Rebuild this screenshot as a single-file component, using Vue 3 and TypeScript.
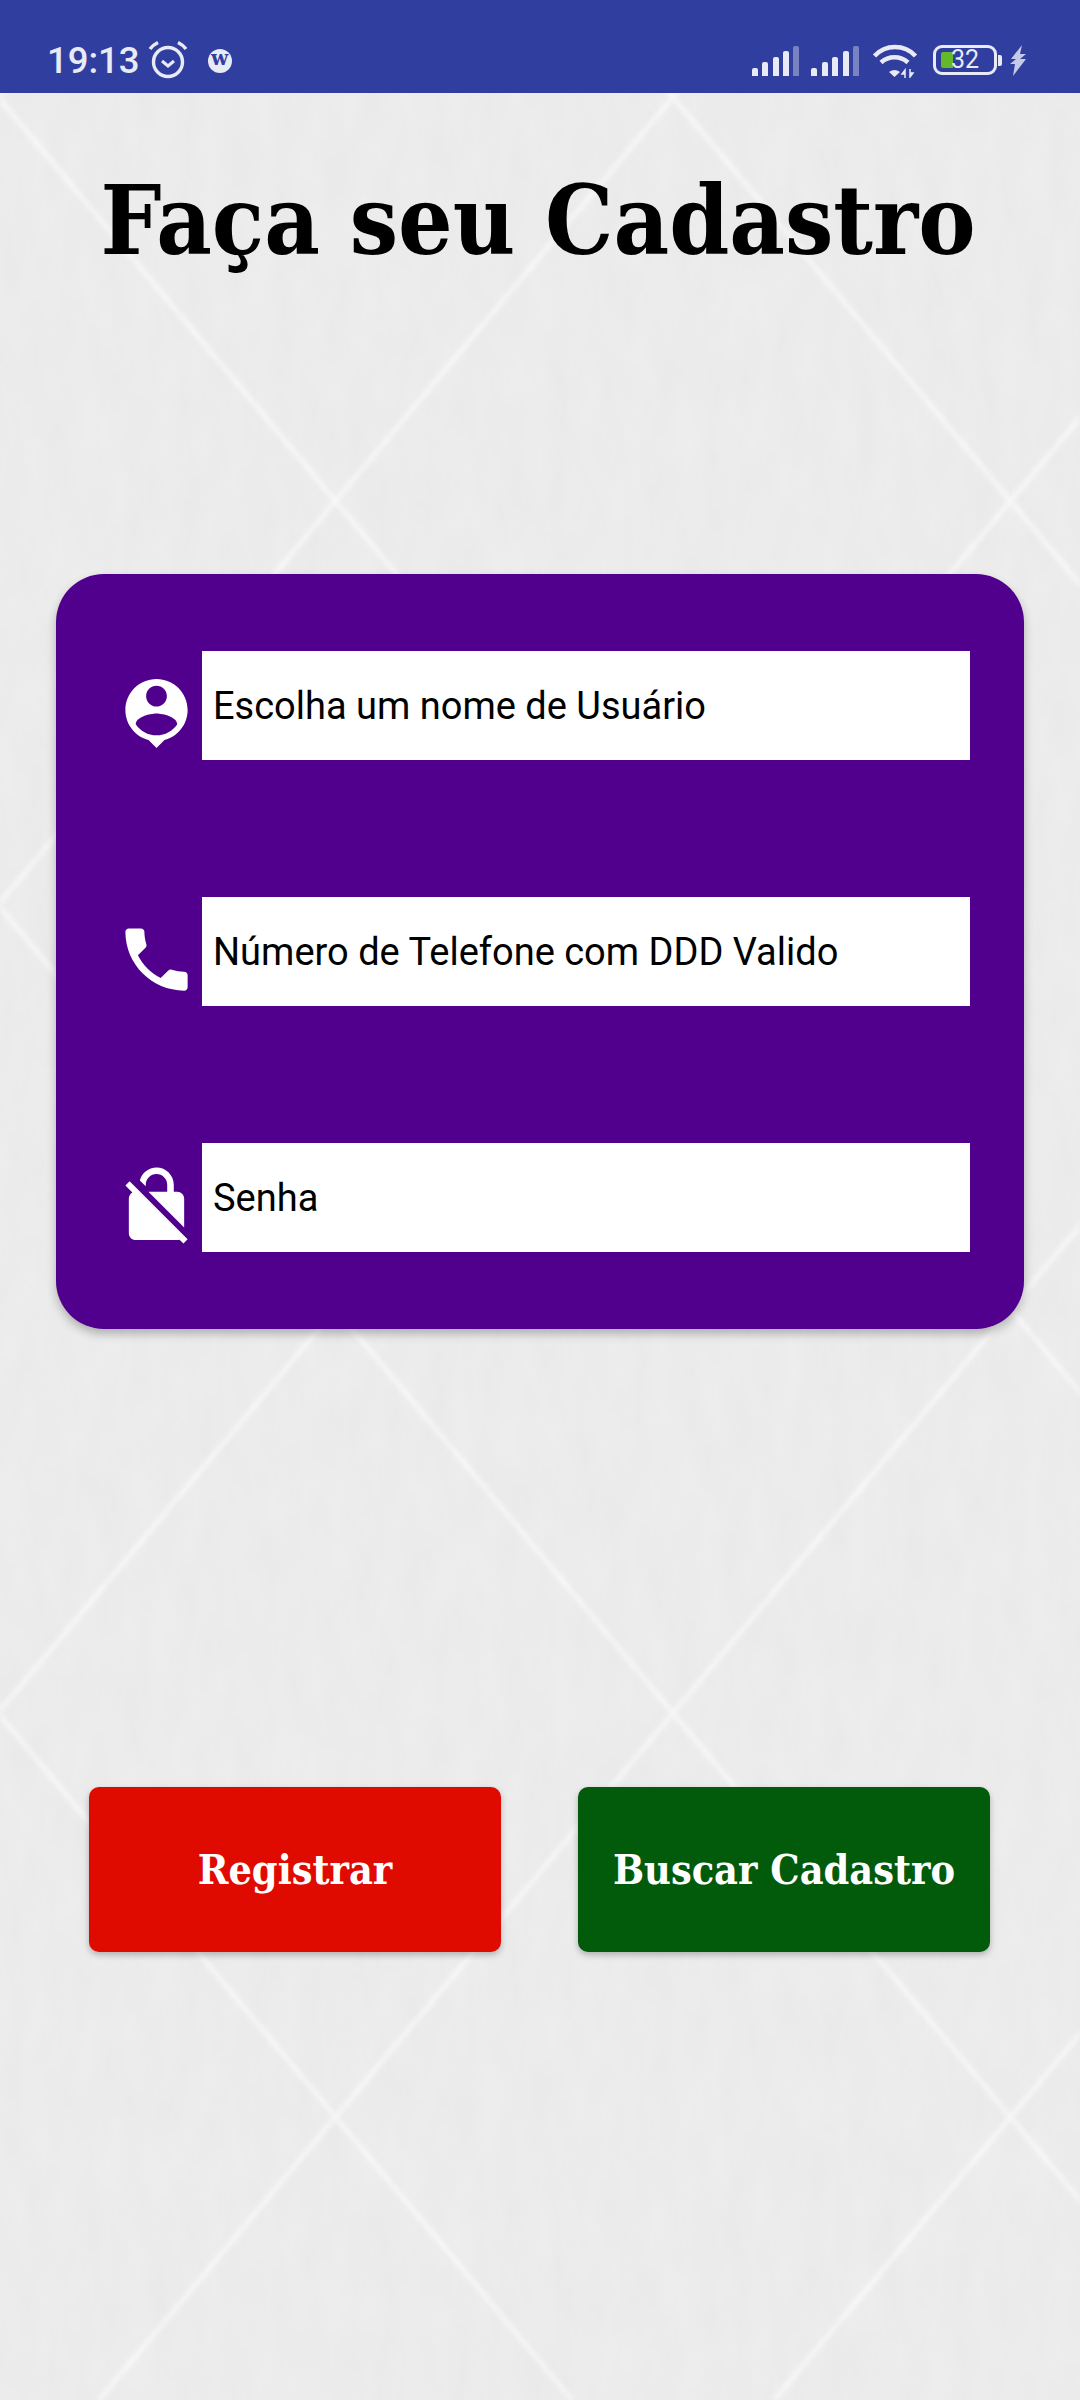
<script setup lang="ts">
interface Field {
  label: string
  icon: string
}

const signalBars = [
  { height: 8, dim: false },
  { height: 14, dim: false },
  { height: 19, dim: false },
  { height: 25, dim: false },
  { height: 30, dim: true },
]

const fields: Field[] = [
  {
    label: 'Escolha um nome de Usuário',
    icon: 'M12 2c-4.97 0-9 4.03-9 9 0 4.17 2.84 7.67 6.69 8.69L12 22l2.31-2.31C18.16 18.67 21 15.17 21 11c0-4.97-4.03-9-9-9zm0 2c1.66 0 3 1.34 3 3s-1.34 3-3 3-3-1.34-3-3 1.34-3 3-3zm0 14.3c-2.5 0-4.71-1.28-6-3.22.03-1.99 4-3.08 6-3.08 1.99 0 5.97 1.09 6 3.08-1.29 1.94-3.5 3.22-6 3.22z',
  },
  {
    label: 'Número de Telefone com DDD Valido',
    icon: 'M6.62 10.79c1.44 2.83 3.76 5.14 6.59 6.59l2.2-2.2c.27-.27.67-.36 1.02-.24 1.12.37 2.33.57 3.57.57.55 0 1 .45 1 1V20c0 .55-.45 1-1 1-9.39 0-17-7.61-17-17 0-.55.45-1 1-1h3.5c.55 0 1 .45 1 1 0 1.25.2 2.45.57 3.57.11.35.03.74-.25 1.02l-2.2 2.2z',
  },
  {
    label: 'Senha',
    icon: 'M21 21.78L4.22 5 3 6.22l2.04 2.04C4.42 8.6 4 9.25 4 10v10c0 1.1.9 2 2 2h12c.23 0 .45-.05.66-.12L19.78 23 21 21.78zM8.9 6c0-1.71 1.39-3.1 3.1-3.1s3.1 1.39 3.1 3.1v2H9.66L20 18.34V10c0-1.1-.9-2-2-2h-1V6c0-2.76-2.24-5-5-5-2.32 0-4.26 1.59-4.82 3.74L8.9 6.46V6z',
  },
]
</script>

<template>
  <div class="screen">
    <svg class="backdrop" width="1080" height="2400" aria-hidden="true">
      <defs>
        <pattern id="lattice" x="-2" y="97" width="675" height="808" patternUnits="userSpaceOnUse">
          <path d="M0 0L337.500 404L0 808M675 0L337.500 404L675 808" fill="none" stroke="#f9f9f9" stroke-width="5" />
        </pattern>
        <filter id="soften" x="0" y="0" width="100%" height="100%">
          <feGaussianBlur stdDeviation="2" />
        </filter>
        <filter id="grain" x="0" y="0" width="100%" height="100%">
          <feTurbulence type="fractalNoise" baseFrequency="0.04 0.015" numOctaves="4" seed="4" />
          <feColorMatrix type="matrix" values="0 0 0 0 0.5  0 0 0 0 0.5  0 0 0 0 0.5  0 0 0 0.1 0" />
        </filter>
      </defs>
      <rect width="1080" height="2400" fill="#eeeeee" />
      <rect width="1080" height="2400" fill="url(#lattice)" filter="url(#soften)" />
      <rect width="1080" height="2400" filter="url(#grain)" />
    </svg>

    <header class="status-bar">
      <div class="status-left">
        <span class="time">19:13</span>
        <svg class="alarm" viewBox="0 0 40 38" width="40" height="38" aria-hidden="true">
          <circle cx="20" cy="21" r="14.5" fill="none" stroke="#e8eaf6" stroke-width="3.4" />
          <path d="M14 20l6 5 6-5" fill="none" stroke="#e8eaf6" stroke-width="3" />
          <path d="M2 8C4 5 7 3 10 1.500M38 8C36 5 33 3 30 1.500" fill="none" stroke="#e8eaf6" stroke-width="3.400" />
        </svg>
        <span class="badge">w</span>
      </div>
      <div class="status-right">
        <div v-for="n in 2" :key="n" class="signal">
          <i
            v-for="(bar, i) in signalBars"
            :key="i"
            :class="{ dim: bar.dim }"
            :style="{ height: `${bar.height}px` }"
          />
        </div>
        <svg class="wifi" viewBox="0 0 46 34" width="46" height="34" aria-hidden="true">
          <path d="M2.500 12A28 28 0 0 1 43.500 12" fill="none" stroke="#e8eaf6" stroke-width="4.500" />
          <path d="M9 18.500A20 20 0 0 1 36 18.500" fill="none" stroke="#e8eaf6" stroke-width="4.500" />
          <path d="M17 28Q22.500 24 28 28L22.500 33z" fill="#e8eaf6" />
          <path d="M33 34V26l-3 4h3M38 25v8l3-4h-3" fill="#e8eaf6" stroke="#e8eaf6" stroke-width="1.500" />
        </svg>
        <div class="battery">
          <span class="charge" />
          <span class="level">32</span>
        </div>
        <span class="nub" />
        <svg class="bolt" viewBox="0 0 18 31" width="18" height="31" aria-hidden="true">
          <path d="M13 0L2 14h5L1 19h5L4 31l13-17h-6l6-5h-6z" fill="#c5cae9" />
        </svg>
      </div>
    </header>

    <main class="content">
      <h1 class="title">Faça seu Cadastro</h1>

      <section class="card">
        <div v-for="field in fields" :key="field.label" class="field">
          <svg class="field-icon" viewBox="0 0 24 24" width="83" height="83" aria-hidden="true">
            <path :d="field.icon" fill="#fff" />
          </svg>
          <div class="input">{{ field.label }}</div>
        </div>
      </section>

      <div class="actions">
        <button class="btn btn-red" type="button">Registrar</button>
        <button class="btn btn-green" type="button">Buscar Cadastro</button>
      </div>
    </main>
  </div>
</template>

<style scoped>
.screen {
  position: relative;
  width: 1080px;
  height: 2400px;
  overflow: hidden;
  background: #eeeeee;
}

.backdrop {
  position: absolute;
  left: 0;
  top: 0;
}

.status-bar {
  position: relative;
  display: flex;
  justify-content: space-between;
  align-items: flex-start;
  height: 93px;
  padding: 0 53px 0 47px;
  box-sizing: border-box;
  background: #303f9f;
  color: #e8eaf6;
}

.status-left {
  display: flex;
  align-items: flex-start;
}

.time {
  margin-top: 39px;
  font: 500 36.5px/44px Roboto, sans-serif;
}

.alarm {
  margin: 41px 0 0 8px;
}

.badge {
  width: 24px;
  height: 24px;
  margin: 49px 0 0 20px;
  border-radius: 50%;
  background: #e8eaf6;
  color: #303f9f;
  font: 700 20px/19px "DejaVu Serif", serif;
  text-align: center;
}

.status-right {
  display: flex;
  align-items: flex-start;
}

.signal {
  display: flex;
  align-items: flex-end;
  gap: 4.4px;
  height: 30px;
  margin: 46px 12px 0 0;
}

.signal i {
  display: block;
  width: 6px;
  border-radius: 2px 2px 0 0;
  background: #e8eaf6;
}

.signal i.dim {
  opacity: 0.4;
}

.wifi {
  margin: 44px 0 0 1px;
}

.battery {
  position: relative;
  width: 64px;
  height: 30px;
  margin: 45px 0 0 15px;
  box-sizing: border-box;
  border: 3px solid #e8eaf6;
  border-radius: 9px;
}

.charge {
  position: absolute;
  left: 5px;
  top: 4px;
  width: 12px;
  height: 16px;
  border-radius: 2px 0 0 2px;
  background: #64b92a;
}

.level {
  position: absolute;
  left: 15px;
  top: -1px;
  font: 400 25px/26px Roboto, sans-serif;
}

.nub {
  width: 4px;
  height: 11px;
  margin: 55px 0 0 1px;
  border-radius: 0 2px 2px 0;
  background: #e8eaf6;
}

.bolt {
  margin: 45px 0 0 7px;
}

.content {
  position: relative;
  display: flex;
  flex-direction: column;
}

.title {
  margin: 68px 4px 0 0;
  font-family: "DejaVu Serif", serif;
  font-stretch: condensed;
  font-size: 95.5px;
  font-weight: 700;
  line-height: 120px;
  text-align: center;
  color: #000;
}

.card {
  display: flex;
  flex-direction: column;
  gap: 137px;
  width: 968px;
  margin: 293px 0 0 56px;
  padding: 77px 54px 77px 59px;
  box-sizing: border-box;
  border-radius: 48px;
  background: #50008c;
  box-shadow: 0 5px 10px rgba(0, 0, 0, 0.25);
}

.field {
  display: flex;
  align-items: flex-end;
  gap: 4px;
}

.field-icon {
  flex: none;
  margin-bottom: 5px;
}

.input {
  flex: 1;
  height: 109px;
  padding-left: 11px;
  background: #fff;
  color: #000;
  font: 400 38px/110px Roboto, sans-serif;
}

.actions {
  display: flex;
  gap: 77px;
  margin: 458px 0 0 89px;
}

.btn {
  width: 412px;
  height: 165px;
  padding: 0;
  border: none;
  border-radius: 10px;
  color: #fff;
  font-family: "DejaVu Serif", serif;
  font-stretch: condensed;
  font-size: 41px;
  font-weight: 700;
  box-shadow: 0 3px 6px rgba(0, 0, 0, 0.25);
}

.btn-red {
  background: #e00b00;
}

.btn-green {
  background: #025a0b;
}
</style>
